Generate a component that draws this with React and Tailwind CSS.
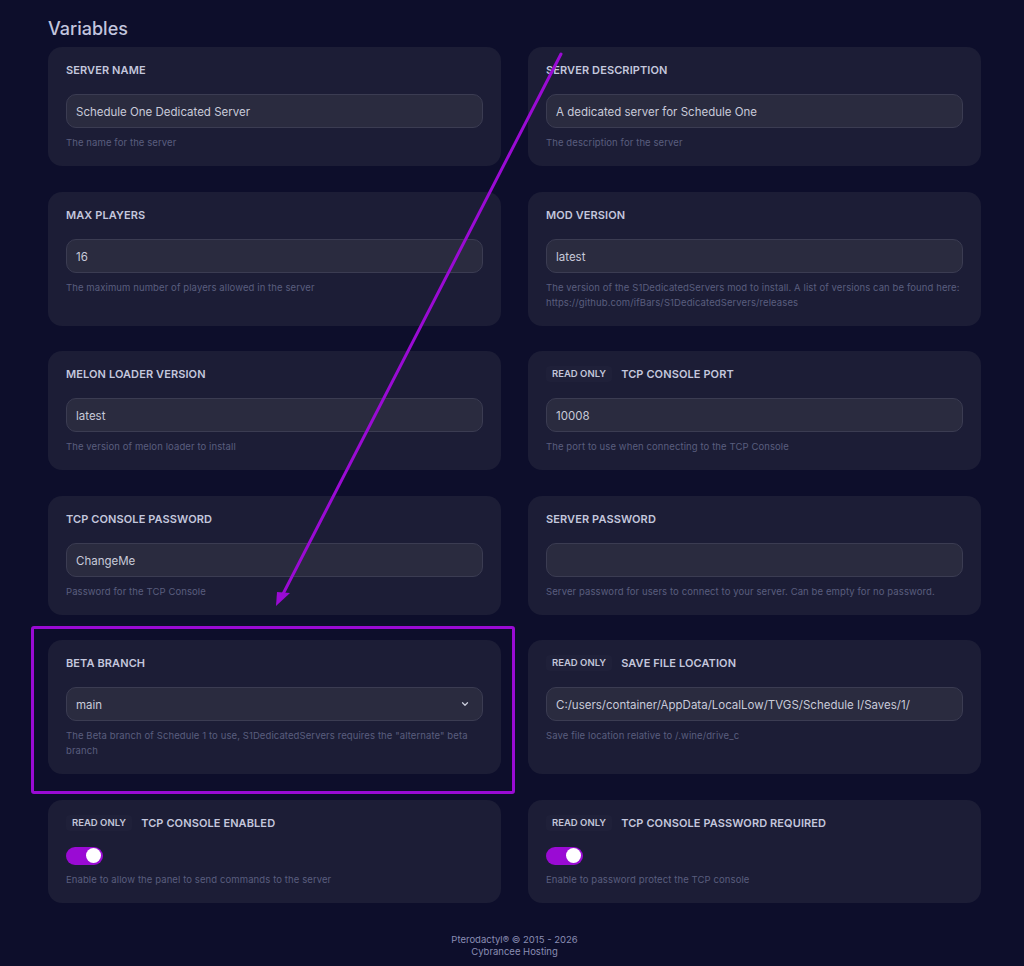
import React from "react";

const font = { fontFamily: "Inter, 'Noto Sans', sans-serif" };

function Label({ text, readOnly }) {
  return (
    <div className="flex h-4 items-center">
      {readOnly && (
        <span className="mr-[9px] rounded-[4px] bg-[#1f2039] px-[6px] py-[2px] text-[9.5px] font-semibold leading-3 text-[#c3c6da]">
          READ ONLY
        </span>
      )}
      <span className="text-[11px] font-semibold uppercase leading-4 tracking-[0.1px] text-[#c4c7dd]">{text}</span>
    </div>
  );
}

function Desc({ children }) {
  return <p className="mt-[7px] text-[9.5px] leading-[15px] tracking-[0.1px] text-[#5a5d7e]">{children}</p>;
}

function InputBox({ value, select }) {
  return (
    <div className="mt-4 flex h-[34px] items-center justify-between rounded-[10px] border border-[#3b3c52] bg-[#2a2b3f] pl-[9px] pr-[12px]">
      <span className="mt-[2px] text-[11.5px] leading-4 text-[#c8cad9]">{value}</span>
      {select && (
        <svg width="10" height="10" viewBox="0 0 24 24" fill="none" stroke="#c8cad9" strokeWidth="3" strokeLinecap="round" strokeLinejoin="round">
          <path d="M6 9l6 6 6-6" />
        </svg>
      )}
    </div>
  );
}

function Toggle() {
  return (
    <div className="mt-4 flex h-[18px] w-[37px] items-center justify-end rounded-full bg-[#9a0bd4] pr-[2px]">
      <div className="h-[15px] w-[15px] rounded-full bg-white" />
    </div>
  );
}

function Card({ label, readOnly, value, select, toggle, desc }) {
  return (
    <div className="rounded-[14px] bg-[#1c1d36] px-[18px] pt-[15px] pb-4">
      <Label text={label} readOnly={readOnly} />
      {toggle ? <Toggle /> : <InputBox value={value} select={select} />}
      <Desc>{desc}</Desc>
    </div>
  );
}

export default function App() {
  return (
    <div className="relative min-h-[966px] w-[1024px] bg-[#0d0e2b]" style={font}>
      <div className="ml-12 w-[933px] pt-[17px]">
        <h2 className="text-[18px] font-medium leading-6 text-[#c2c5de]">Variables</h2>
        <div className="mt-[6px] grid grid-cols-2 gap-x-[27px] gap-y-[25.5px]">
          <Card label="Server Name" value="Schedule One Dedicated Server" desc="The name for the server" />
          <Card label="Server Description" value="A dedicated server for Schedule One" desc="The description for the server" />
          <Card label="Max Players" value="16" desc="The maximum number of players allowed in the server" />
          <Card
            label="Mod Version"
            value="latest"
            desc={<>The version of the S1DedicatedServers mod to install. A list of versions can be found here: https://github.com/ifBars/S1DedicatedServers/releases</>}
          />
          <Card label="Melon Loader Version" value="latest" desc="The version of melon loader to install" />
          <Card label="TCP Console Port" readOnly value="10008" desc="The port to use when connecting to the TCP Console" />
          <Card label="TCP Console Password" value="ChangeMe" desc="Password for the TCP Console" />
          <Card label="Server Password" value="" desc="Server password for users to connect to your server. Can be empty for no password." />
          <Card
            label="Beta Branch"
            value="main"
            select
            desc={'The Beta branch of Schedule 1 to use, S1DedicatedServers requires the "alternate" beta branch'}
          />
          <Card
            label="Save File Location"
            readOnly
            value="C:/users/container/AppData/LocalLow/TVGS/Schedule I/Saves/1/"
            desc="Save file location relative to /.wine/drive_c"
          />
          <Card label="TCP Console Enabled" readOnly toggle desc="Enable to allow the panel to send commands to the server" />
          <Card label="TCP Console Password Required" readOnly toggle desc="Enable to password protect the TCP console" />
        </div>
        <div className="mt-[31px] pb-[10px] text-center text-[9.5px] leading-3 text-[#8a8db3]">
          <p>Pterodactyl® © 2015 - 2026</p>
          <p>Cybrancee Hosting</p>
        </div>
      </div>

      {/* annotation box */}
      <div className="absolute left-[31px] top-[626px] h-[168px] w-[484px] rounded-[3px] border-[3px] border-[#9a0bd4]" />

      {/* annotation arrow */}
      <svg className="pointer-events-none absolute left-0 top-0" width="1024" height="966">
        <line x1="561" y1="54" x2="283" y2="594" stroke="#9a0bd4" strokeWidth="3" strokeLinecap="round" />
        <polygon points="276,606 277,592 290,593" fill="#9a0bd4" />
      </svg>
    </div>
  );
}
